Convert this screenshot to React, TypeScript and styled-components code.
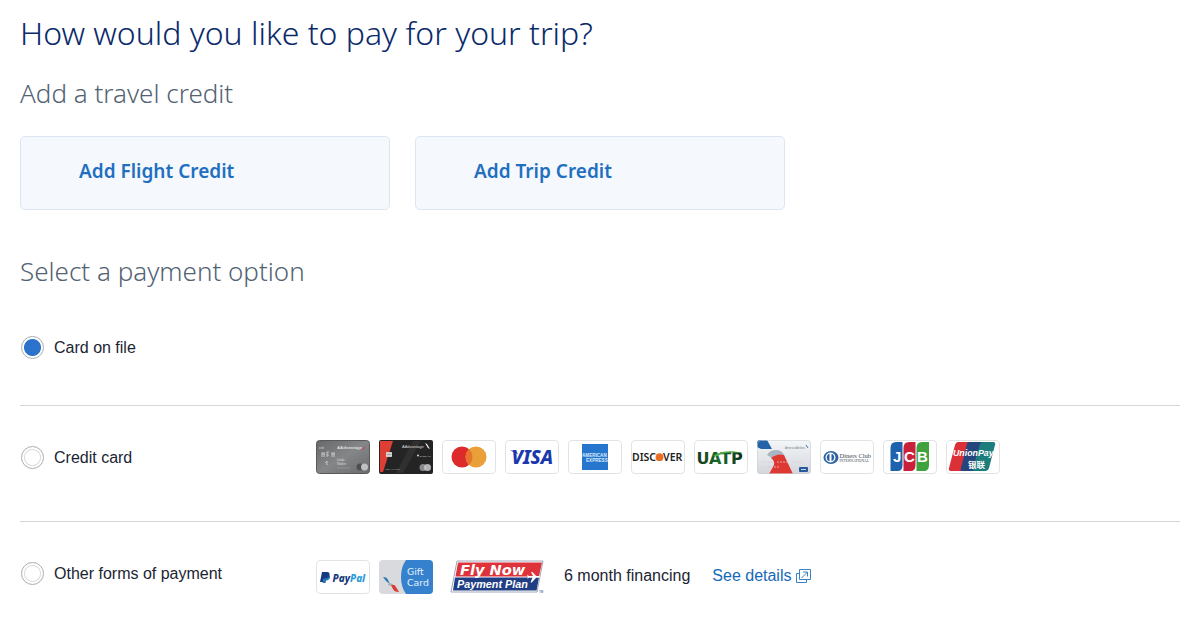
import React, { useState } from "react";
import styled, { createGlobalStyle, css } from "styled-components";

const display = `"Noto Sans", "Open Sans", sans-serif`;
const body = `"Liberation Sans", Arial, sans-serif`;

const GlobalStyle = createGlobalStyle`
  *, *::before, *::after { box-sizing: border-box; }
  body { margin: 0; background: #fff; color: #1b2433; font-family: ${body}; font-size: 16px; line-height: 24px; }
`;

const Page = styled.main`
  padding: 8px 20px 20px;
`;

const Title = styled.h1`
  margin: 0;
  font: 300 32px/50px ${display};
  color: #0b2a6b;
`;

const SectionTitle = styled.h2<{ $spaced?: boolean }>`
  margin: ${(p) => (p.$spaced ? "43px 0 0" : "17px 0 0")};
  font: 300 26px/36px ${display};
  color: #536374;
`;

const CreditActions = styled.div`
  display: flex;
  flex-wrap: wrap;
  gap: 25px;
  margin-top: 25px;
`;

const CreditButton = styled.button`
  flex: 0 1 370px;
  padding: 21px 58px 24px;
  border: 1px solid #dce6f2;
  border-radius: 5px;
  background: #f5f9fe;
  color: #226fc0;
  font: 600 19px/27px ${display};
  text-align: left;
  cursor: pointer;
`;

const Options = styled.fieldset`
  min-width: 0;
  margin: 0;
  padding: 0;
  border: 0;
`;

const Row = styled.div<{ $plain?: boolean }>`
  display: flex;
  flex-wrap: wrap;
  padding: ${(p) => (p.$plain ? "41px 0" : "34px 0 47px")};
  & + & { border-top: 1px solid #d3d6da; }
`;

const Choice = styled.label`
  display: flex;
  align-items: center;
  flex: 0 0 296px;
  height: 34px;
  gap: 10px;
  padding-left: 1px;
  line-height: 25px;
  cursor: pointer;
`;

const Radio = styled.input`
  appearance: none;
  flex: none;
  width: 23px;
  height: 23px;
  margin: 0;
  border: 1px solid #a9adb3;
  border-radius: 50%;
  background: radial-gradient(circle, #fff 7px, #d9dbde 8px, #fff 9px);
  cursor: pointer;
  &:checked { background: radial-gradient(circle, #2b72cb 8px, #fff 9px); }
`;

const Methods = styled.div<{ $tall?: boolean }>`
  display: flex;
  flex-wrap: wrap;
  align-items: center;
  gap: 9px;
  ${(p) => p.$tall && css`min-height: 42px;`}
`;

const Logo = styled.svg`
  display: block;
  flex: none;
  width: 54px;
  height: 34px;
`;

const PlanLogo = styled.svg`
  display: block;
  flex: none;
  width: 96px;
  height: 34px;
  margin-left: 8px;
`;

const Financing = styled.span`
  margin: -2px 0 0 9px;
`;

const Details = styled.a`
  display: inline-flex;
  align-items: center;
  gap: 5px;
  margin: -2px 0 0 13px;
  color: #1468b8;
  text-decoration: none;
`;

const sans = "Liberation Sans, sans-serif";
const noto = "Noto Sans, sans-serif";
const wide = "DejaVu Sans, sans-serif";

const Frame = () => <rect x="0.5" y="0.5" width="53" height="33" rx="3.5" fill="#fff" stroke="#e2e3e5" />;

const Chip = () => (
  <g>
    <rect x="7" y="12" width="6" height="5" rx="1" fill="#e4e4e4" />
    <path d="M9 12v5M11 12v5M7 14.5h6" stroke="#8a8a8a" strokeWidth="0.5" />
  </g>
);

const GreyCard = () => (
  <Logo viewBox="0 0 54 34" role="img" aria-label="Aviator Silver card">
    <defs>
      <linearGradient id="silver" x1="0" y1="0" x2="1" y2="1">
        <stop offset="0" stopColor="#66686a" />
        <stop offset="0.5" stopColor="#848688" />
        <stop offset="1" stopColor="#696b6d" />
      </linearGradient>
    </defs>
    <rect x="0.5" y="0.5" width="53" height="33" rx="3" fill="url(#silver)" stroke="#57595b" />
    <g fill="#dedede" fontFamily={sans}>
      <text x="3" y="9" fontSize="4">citi</text>
      <text x="21" y="8.5" fontSize="4.3" fontWeight="700">AAdvantage</text>
      <text x="21" y="20.5" fontSize="3">Linda</text>
      <text x="21" y="24.5" fontSize="3">Walker</text>
    </g>
    <path d="M6 12v5M8 12v5M6 14h3M11 12v5M11 12h2M11 15h2M16 12v5M18 12v5M16 14h3M9 23l2-2v4" fill="none" stroke="#c5c6c7" />
    <path d="m46 9 3-3-1 4z" fill="#c34d53" />
    <path d="M21 28h13" stroke="#9a9c9e" strokeWidth="0.7" />
    <circle cx="44" cy="27" r="3.5" fill="#4c4e50" />
    <circle cx="48.5" cy="27" r="3.5" fill="#bfc0c1" />
  </Logo>
);

const BlackCard = () => (
  <Logo viewBox="0 0 54 34" role="img" aria-label="Aviator Red card">
    <rect width="54" height="34" rx="2" fill="#242425" />
    <path d="M1 1h13L4 32H1z" fill="#df3e34" />
    <path d="M34 1h8L24 33h-7z" fill="#303031" />
    <Chip />
    <text x="23" y="7.5" fontSize="4" fill="#d8d8d8" fontFamily={sans}>AAdvantage</text>
    <path d="m46 3 2 1 3 5-2-1z" fill="#f1f1f1" />
    <circle cx="39" cy="15.5" r="1" fill="#ddd" />
    <text x="41" y="16.5" fontSize="2" fill="#ddd" fontFamily={sans}>BARCLAYS</text>
    <text x="6" y="30" fontSize="2" fill="#b6b6b6" fontFamily={sans}>LINDA WALKER</text>
    <circle cx="44" cy="27.5" r="3.5" fill="#89898b" />
    <circle cx="48.5" cy="27.5" r="3.5" fill="#c9c9cb" fillOpacity="0.85" />
  </Logo>
);

const Mastercard = () => (
  <Logo viewBox="0 0 54 34" role="img" aria-label="Mastercard">
    <Frame />
    <circle cx="20" cy="17" r="10.5" fill="#dc2b2a" />
    <circle cx="34" cy="17" r="10.5" fill="#eaa038" />
    <path d="M27 9.2a10.5 10.5 0 0 1 0 15.6a10.5 10.5 0 0 1 0-15.6z" fill="#e8732e" />
  </Logo>
);

const Visa = () => (
  <Logo viewBox="0 0 54 34" role="img" aria-label="Visa">
    <Frame />
    <text x="6.5" y="24" fontSize="19" fontWeight="800" fontStyle="italic" fontFamily={noto} fill="#1b37ac">VISA</text>
    <path d="M5 10.5h6l2 4-3-2z" fill="#1b37ac" />
  </Logo>
);

const Amex = () => (
  <Logo viewBox="0 0 54 34" role="img" aria-label="American Express">
    <Frame />
    <rect x="14" y="4" width="26" height="26" fill="#2676cd" />
    <g fontFamily={sans} fontWeight="700" fontSize="4.6" fill="#d9eafc">
      <text x="14" y="16.5">AMERICAN</text>
      <text x="18" y="22">EXPRESS</text>
    </g>
  </Logo>
);

const Discover = () => (
  <Logo viewBox="0 0 54 34" role="img" aria-label="Discover">
    <Frame />
    <g fill="#222" fontFamily={noto} fontWeight="600" fontSize="10.5">
      <text x="1" y="21">DISC</text>
      <text x="32" y="21">VER</text>
    </g>
    <circle cx="28.5" cy="17.2" r="3.9" fill="#e96f25" />
  </Logo>
);

const Uatp = () => (
  <Logo viewBox="0 0 54 34" role="img" aria-label="UATP">
    <defs>
      <linearGradient id="uatp" x1="0" y1="0" x2="1" y2="0">
        <stop offset="0" stopColor="#143820" />
        <stop offset="0.5" stopColor="#1b6c2b" />
        <stop offset="1" stopColor="#102c1b" />
      </linearGradient>
    </defs>
    <Frame />
    <text x="2.5" y="23.5" fontSize="16" fontWeight="700" fontFamily={wide} fill="url(#uatp)">UATP</text>
    <path d="M19 16c7-5 18-6 30-3c-11-1-19-1-26 3z" fill="#51ad4c" />
  </Logo>
);

const AirlineCard = () => (
  <Logo viewBox="0 0 54 34" role="img" aria-label="American Airlines card">
    <defs>
      <linearGradient id="airline" x1="0" y1="0" x2="0" y2="1">
        <stop offset="0" stopColor="#f4f6f8" />
        <stop offset="1" stopColor="#d3d7dc" />
      </linearGradient>
      <clipPath id="airlineEdge"><rect width="54" height="34" rx="3" /></clipPath>
    </defs>
    <g clipPath="url(#airlineEdge)">
      <rect width="54" height="34" fill="url(#airline)" />
      <path d="M0 0h10l5 9H4L0 7z" fill="#2563a8" />
      <path d="M10 15q3-5 9-5 6 0 8 5-8-1-12 3z" fill="#aab5c2" />
      <path d="M14 18q6-5 13-3l9 19H12l5-9q1-4-3-7z" fill="#dd3831" />
      <rect x="42" y="27" width="9" height="5" rx="1" fill="#27599b" />
      <path d="M44 29.5h5" stroke="#c3d5e8" />
    </g>
    <text x="28" y="9" fontSize="2.7" fill="#747f8b" fontFamily={sans}>AmericanAirlines</text>
    <path d="M49 5l2 3" stroke="#4974a4" />
    <path d="M5 22h12M20 22h12M35 22h12M5 27h17" stroke="#e6c9ca" strokeWidth="0.8" strokeDasharray="2 1" />
    <rect x="0.5" y="0.5" width="53" height="33" rx="3" fill="none" stroke="#ccd2d8" strokeOpacity="0.6" />
  </Logo>
);

const Diners = () => (
  <Logo viewBox="0 0 54 34" role="img" aria-label="Diners Club International">
    <Frame />
    <ellipse cx="11" cy="17.5" rx="7.5" ry="6.5" fill="#2c62a3" />
    <circle cx="10.5" cy="17.5" r="5" fill="#fff" />
    <path d="M9.5 13.7a4 4 0 0 0 0 7.6zM11.5 13.7a4 4 0 0 1 0 7.6z" fill="#2c62a3" />
    <text x="19.5" y="17.5" fontSize="6.5" fill="#414a57" fontFamily="Liberation Serif, serif">Diners Club</text>
    <text x="19.5" y="21.7" fontSize="3.7" fill="#414a57" fontFamily="Liberation Serif, serif">INTERNATIONAL</text>
  </Logo>
);

const Jcb = () => (
  <Logo viewBox="0 0 54 34" role="img" aria-label="JCB">
    <Frame />
    <path d="M13 2h6.5v23q0 6-5 6H7.500V8q0-6 5.500-6z" fill="#1e61ad" />
    <path d="M26 2h6.5v23q0 6-5 6h-7V8q0-6 5.500-6z" fill="#c9203c" />
    <path d="M39 2h7v23q0 6-5 6h-7.500V8q0-6 5.500-6z" fill="#3fa23f" />
    <g fill="#fff" fontWeight="700" fontSize="15" fontFamily={sans}>
      <text x="10" y="22">J</text>
      <text x="21" y="22">C</text>
      <text x="34" y="22">B</text>
    </g>
  </Logo>
);

const UnionPay = () => (
  <Logo viewBox="0 0 54 34" role="img" aria-label="UnionPay">
    <Frame />
    <path d="M12 2h13l-7 29H5q-3 0-2-3L9 5q1-3 3-3z" fill="#dc3038" />
    <path d="M23 2h15l-7 29H16q-2 0-1-3L21 4q0-2 2-2z" fill="#24467c" />
    <path d="M37 2h10q3 0 2 3l-6 23q-1 3-4 3H28q-2 0-1-3L34 4q1-2 3-2z" fill="#1c7d7c" />
    <text x="7" y="15.5" fontSize="8.8" fontWeight="700" fontStyle="italic" fill="#fff" fontFamily={sans}>UnionPay</text>
    <text x="22" y="27.5" fontSize="8.5" fontWeight="700" fill="#fff" fontFamily="Noto Sans CJK SC, sans-serif">银联</text>
  </Logo>
);

const PayPal = () => (
  <Logo viewBox="0 0 54 34" role="img" aria-label="PayPal">
    <Frame />
    <path d="M8 15h4q2.5 0 2 2.5T10 20.5L9.5 23H6.5L8 19z" fill="#2473b8" />
    <path d="M6 12h5q3 0 2.5 3t-4.5 3.5H8L7 22H4z" fill="#143b80" />
    <text x="16.5" y="21.5" fontSize="10" fontWeight="800" fontStyle="italic" fontFamily={noto}>
      <tspan fill="#173a7c">Pay</tspan><tspan fill="#2f9bd8">Pal</tspan>
    </text>
  </Logo>
);

const GiftCard = () => (
  <Logo viewBox="0 0 54 34" role="img" aria-label="Gift card">
    <rect width="54" height="34" rx="4" fill="#d9dadd" />
    <path d="M27 0h23q4 0 4 4v26q0 4-4 4H27q-5-7-5-17t5-17z" fill="#3581cd" />
    <path d="M4 17q4 0 5 3l2 4q-4-2-7-7z" fill="#2778b6" />
    <path d="M9 24l3-1 2 2-4 1z" fill="#a9b1ba" />
    <path d="M12 25q4-1 5 2l3 5q-5 0-6-3z" fill="#d93b35" />
    <g fill="#e5f1ff" fontFamily={wide} fontSize="9.4">
      <text x="28" y="15">Gift</text>
      <text x="28" y="26">Card</text>
    </g>
  </Logo>
);

const FlyNow = () => (
  <PlanLogo viewBox="0 0 96 34" role="img" aria-label="Fly Now Payment Plan">
    <path d="M7 1h86l-6 31H1z" fill="#fff" stroke="#9fa8bb" />
    <path d="M8 2.5h84l-3 14H5.5z" fill="#df333b" />
    <path d="M5 17.5h84l-2.5 13H3z" fill="#203e83" />
    <text x="10" y="14.5" fontSize="14.6" fontWeight="700" fontStyle="italic" fill="#fff" fontFamily={wide}>Fly Now</text>
    <text x="7" y="28" fontSize="10.8" fontWeight="700" fontStyle="italic" fill="#fff" fontFamily={sans}>Payment Plan</text>
    <path d="M79 16h4l-2-4h1.300l4 4h3q1.500 .8 0 1.600h-3l-4.500 5h-1.300l2-5h-3.500l-1.500 1.500 .3-2.300-.8-2.300z" fill="#fff" />
    <text x="89" y="33" fontSize="3" fill="#203e83" fontFamily={sans}>TM</text>
  </PlanLogo>
);

const NewWindowIcon = () => (
  <svg width="15" height="15" viewBox="0 0 15 15" fill="none" stroke="#3c83c5" aria-hidden="true">
    <path d="M3.5 0.5h11v10h-11z M3.5 4.5h-3v9h10v-3" />
    <path d="M5.5 9l6-6M7 3h4.5v4.5" />
  </svg>
);

export default function App() {
  const [method, setMethod] = useState("file");
  const option = (value: string, label: string) => (
    <Choice htmlFor={value}>
      <Radio type="radio" name="payment" id={value} checked={method === value} onChange={() => setMethod(value)} />
      {label}
    </Choice>
  );

  return (
    <>
      <GlobalStyle />
      <Page>
        <Title>How would you like to pay for your trip?</Title>
        <SectionTitle>Add a travel credit</SectionTitle>
        <CreditActions>
          <CreditButton type="button">Add Flight Credit</CreditButton>
          <CreditButton type="button">Add Trip Credit</CreditButton>
        </CreditActions>
        <SectionTitle $spaced id="payment-title">Select a payment option</SectionTitle>
        <Options aria-labelledby="payment-title">
          <Row $plain>{option("file", "Card on file")}</Row>
          <Row>
            {option("credit", "Credit card")}
            <Methods>
              <GreyCard />
              <BlackCard />
              <Mastercard />
              <Visa />
              <Amex />
              <Discover />
              <Uatp />
              <AirlineCard />
              <Diners />
              <Jcb />
              <UnionPay />
            </Methods>
          </Row>
          <Row>
            {option("other", "Other forms of payment")}
            <Methods $tall>
              <PayPal />
              <GiftCard />
              <FlyNow />
              <Financing>6 month financing</Financing>
              <Details href="#details">
                See details
                <NewWindowIcon />
              </Details>
            </Methods>
          </Row>
        </Options>
      </Page>
    </>
  );
}
